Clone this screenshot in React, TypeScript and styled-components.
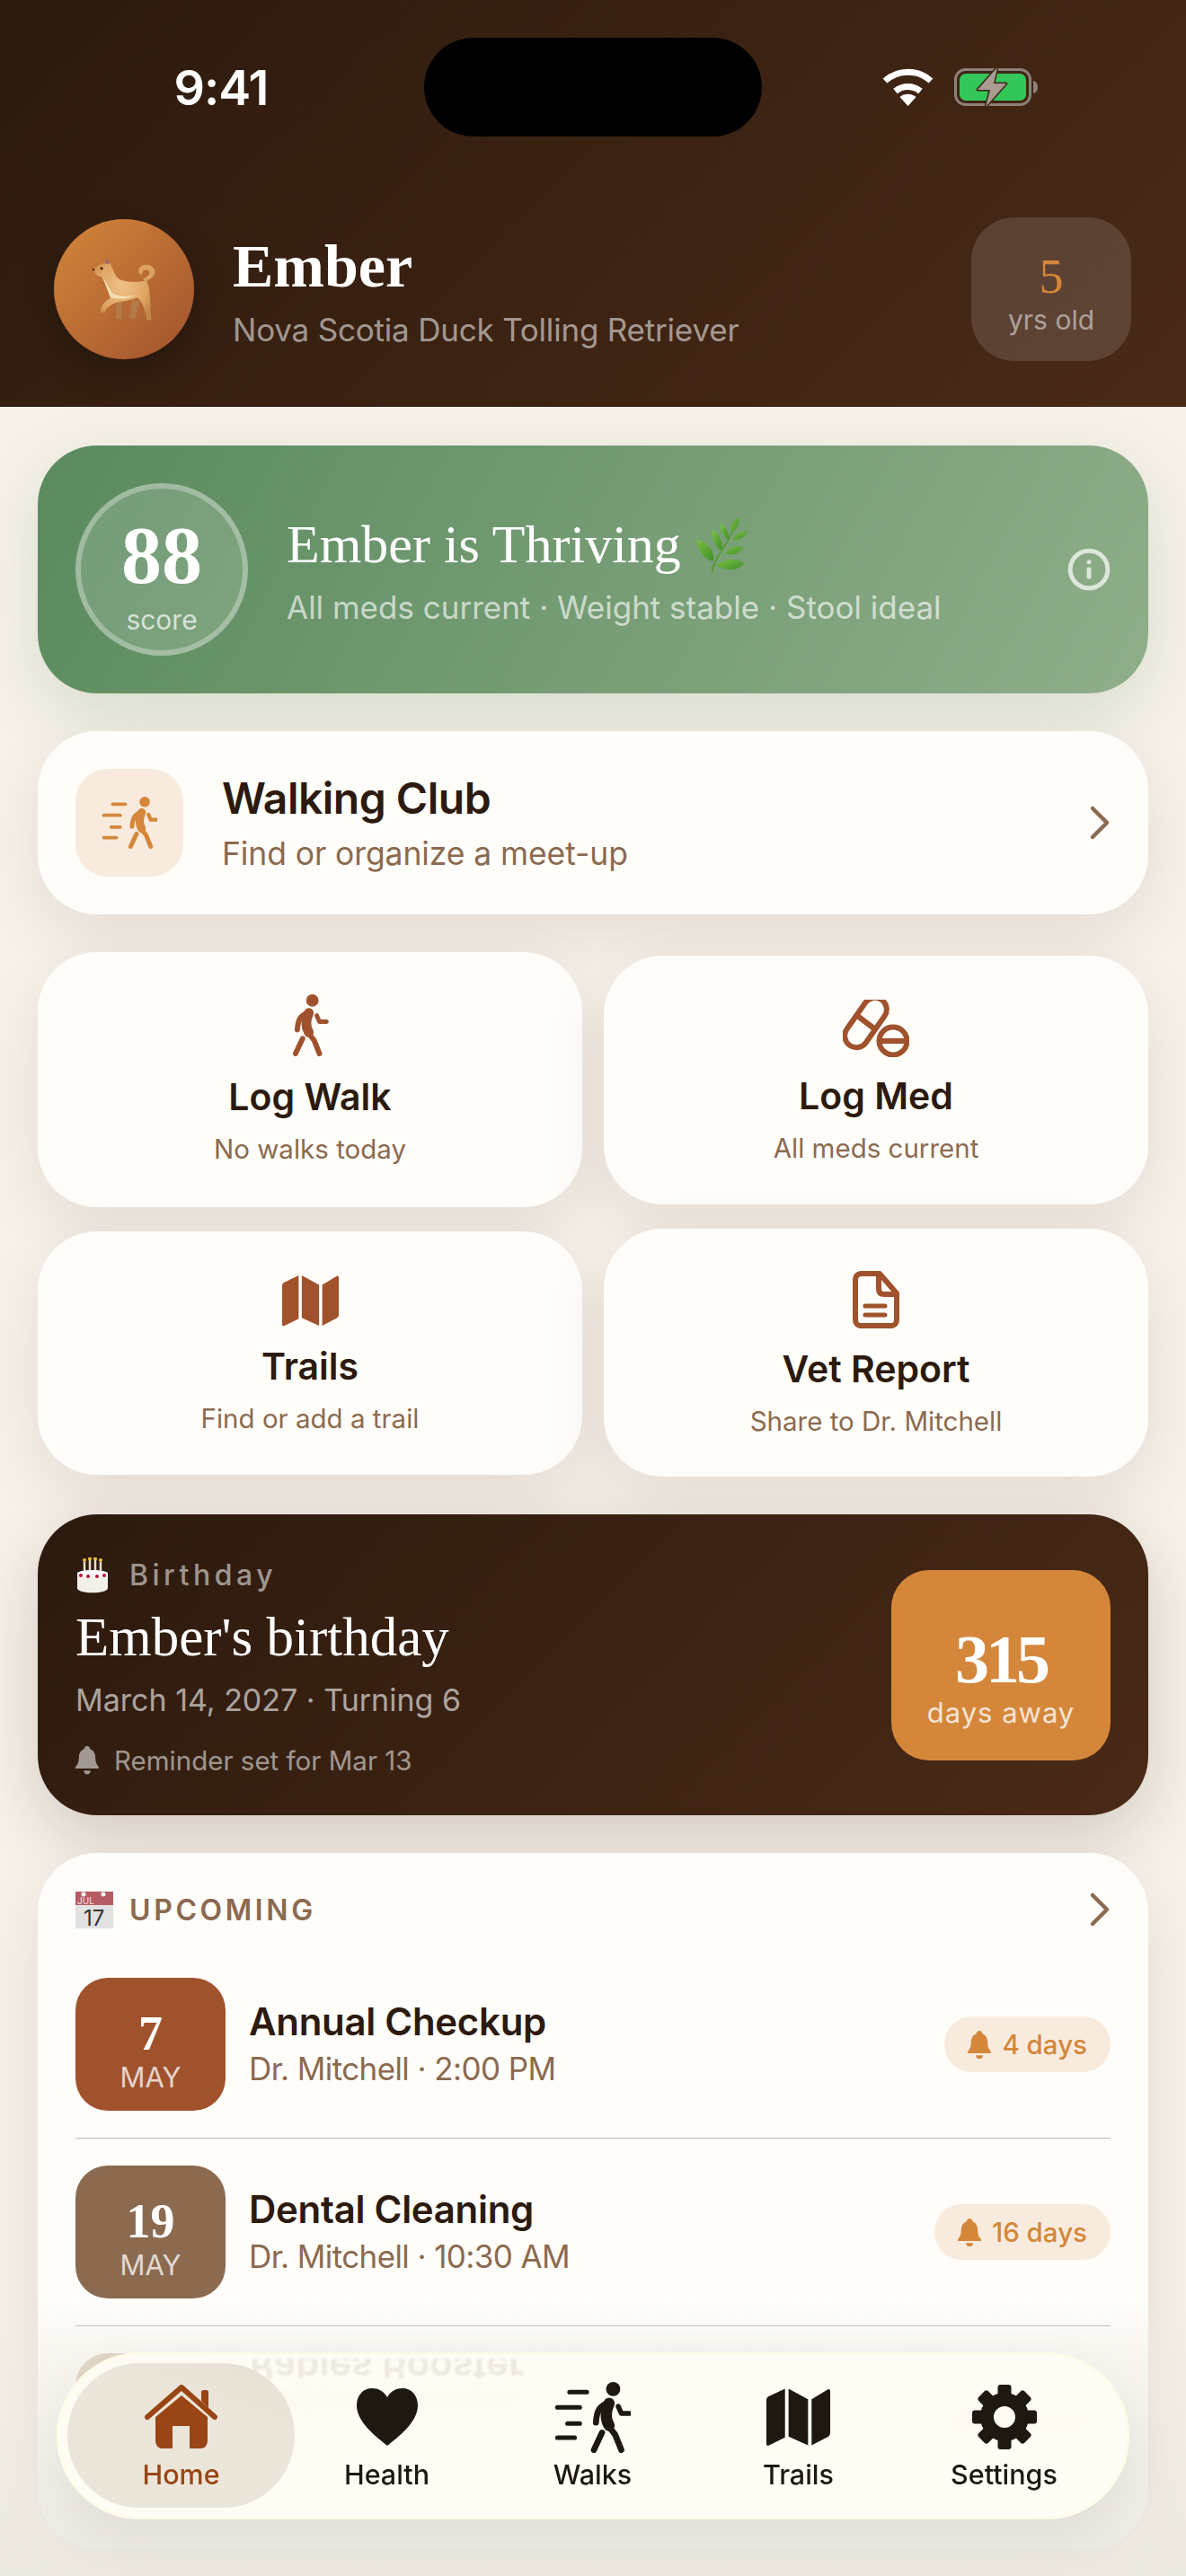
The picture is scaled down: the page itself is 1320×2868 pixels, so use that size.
import React from 'react'
import styled, { createGlobalStyle } from 'styled-components'
import { Info } from 'lucide-react'

const SERIF = '"Liberation Serif", "DejaVu Serif", serif'
const SANS = 'Inter, "Noto Sans", sans-serif'

const Global = createGlobalStyle`
  html, body { margin: 0; padding: 0; background: #f7f1e9; }
  * { box-sizing: border-box; }
`

const Page = styled.div`
  position: relative;
  width: 1320px;
  height: 2868px;
  overflow: hidden;
  background: #f7f1e9;
  font-family: ${SANS};
  color: #2c1a0e;
`

const Header = styled.header`
  height: 453px;
  padding-top: 42px;
  background: linear-gradient(135deg, #2c1a0e 0%, #4a2a17 100%);
`

const StatusBar = styled.div`
  display: grid;
  grid-template-columns: 472px 376px 472px;
  align-items: center;
`

const Clock = styled.div`
  padding-left: 20px;
  text-align: center;
  font-size: 54px;
  font-weight: 600;
  letter-spacing: -1px;
  color: #fff;
`

const Island = styled.div`
  height: 110px;
  border-radius: 55px;
  background: #000;
`

const StatusIcons = styled.div`
  display: flex;
  justify-content: center;
  align-items: center;
  gap: 23px;
  padding-right: 32px;
`

const Profile = styled.div`
  display: flex;
  align-items: center;
  margin-top: 90px;
  padding: 0 61px 0 60px;
`

const Avatar = styled.div`
  display: flex;
  align-items: center;
  justify-content: center;
  flex: none;
  width: 156px;
  height: 156px;
  border-radius: 50%;
  background: linear-gradient(135deg, #d4873a, #a0522d);
  box-shadow: 0 12px 36px rgba(0, 0, 0, 0.25);
`

const ProfileText = styled.div`
  flex: 1;
  margin-left: 43px;
`

const Name = styled.div`
  font-family: ${SERIF};
  font-size: 68px;
  font-weight: 700;
  line-height: 84px;
  color: #fff;
`

const Breed = styled.div`
  margin-top: 5px;
  font-size: 35px;
  line-height: 48px;
  letter-spacing: -0.2px;
  color: rgba(255, 255, 255, 0.55);
`

const AgeBadge = styled.div`
  display: flex;
  flex-direction: column;
  align-items: center;
  justify-content: center;
  width: 178px;
  height: 160px;
  padding-top: 12px;
  border-radius: 48px;
  background: rgba(255, 255, 255, 0.13);
`

const AgeValue = styled.div`
  font-family: ${SERIF};
  font-size: 54px;
  line-height: 56px;
  color: #d4873a;
`

const AgeLabel = styled.div`
  font-size: 30px;
  line-height: 40px;
  color: rgba(255, 255, 255, 0.5);
`

const Content = styled.main`
  display: flex;
  flex-direction: column;
  gap: 42px;
  padding: 43px 42px 0;
`

const ScoreCard = styled.section`
  display: flex;
  align-items: center;
  height: 276px;
  padding: 0 41px 0 42px;
  border-radius: 66px;
  background: linear-gradient(118deg, #5a8a5e 0%, #8fae8a 100%);
  box-shadow: 0 24px 72px rgba(90, 138, 94, 0.2);
`

const ScoreRing = styled.div`
  display: flex;
  flex-direction: column;
  align-items: center;
  flex: none;
  width: 192px;
  height: 192px;
  padding-top: 30px;
  border: 6px solid rgba(255, 255, 255, 0.3);
  border-radius: 50%;
  background: rgba(255, 255, 255, 0.15);
`

const ScoreValue = styled.div`
  font-family: ${SERIF};
  font-size: 90px;
  font-weight: 700;
  line-height: 90px;
  color: #fff;
`

const ScoreLabel = styled.div`
  margin-top: 6px;
  font-size: 30px;
  line-height: 40px;
  color: rgba(255, 255, 255, 0.7);
`

const ScoreText = styled.div`
  flex: 1;
  margin-left: 43px;
  padding-top: 3px;
`

const ScoreTitle = styled.div`
  display: flex;
  align-items: center;
  gap: 14px;
  font-family: ${SERIF};
  font-size: 60px;
  line-height: 68px;
  color: #fff;
`

const ScoreSub = styled.div`
  margin-top: 13px;
  font-size: 35px;
  line-height: 46px;
  color: rgba(255, 255, 255, 0.65);
`

const Card = styled.section`
  border-radius: 66px;
  background: #fefdf9;
  box-shadow: 0 24px 72px rgba(44, 26, 14, 0.09);
`

const ClubCard = styled(Card)`
  display: flex;
  align-items: center;
  height: 204px;
  padding: 0 42px;
`

const ClubIcon = styled.div`
  display: flex;
  align-items: center;
  justify-content: center;
  flex: none;
  width: 120px;
  height: 120px;
  border-radius: 36px;
  background: #f8ebdd;
`

const ClubText = styled.div`
  flex: 1;
  margin-left: 43px;
`

const ClubTitle = styled.div`
  margin-top: 2px;
  font-size: 48px;
  font-weight: 600;
  line-height: 60px;
  letter-spacing: -0.5px;
`

const ClubSub = styled.div`
  margin-top: 8px;
  font-size: 35.5px;
  line-height: 48px;
  letter-spacing: -0.1px;
  color: #8b6a50;
`

const ActionGrid = styled.div`
  display: grid;
  grid-template-columns: 606px 606px;
  column-gap: 24px;
  row-gap: 24px;
  align-items: center;
`

const ActionCard = styled(Card)<{ $h: number; $top: number }>`
  display: flex;
  flex-direction: column;
  align-items: center;
  height: ${p => p.$h}px;
  padding-top: ${p => p.$top}px;
`

const ActionTitle = styled.div<{ $gap: number }>`
  margin-top: ${p => p.$gap}px;
  font-size: 41px;
  font-weight: 600;
  line-height: 56px;
`

const ActionSub = styled.div`
  margin-top: 10px;
  font-size: 29.5px;
  line-height: 40px;
  color: #8b6a50;
`

const BirthdayCard = styled.section`
  display: flex;
  align-items: center;
  justify-content: space-between;
  height: 335px;
  padding: 0 42px;
  border-radius: 66px;
  background: linear-gradient(135deg, #2c1a0e 0%, #4a2a17 100%);
  box-shadow: 0 24px 72px rgba(44, 26, 14, 0.18);
`

const BirthdayEyebrow = styled.div`
  display: flex;
  align-items: center;
  gap: 20px;
  margin-top: 6px;
  font-size: 32px;
  font-weight: 500;
  line-height: 40px;
  letter-spacing: 4.5px;
  color: rgba(255, 255, 255, 0.55);
`

const BirthdayTitle = styled.div`
  margin-top: 14px;
  font-family: ${SERIF};
  font-size: 61px;
  line-height: 70px;
  color: #fff;
`

const BirthdayDate = styled.div`
  margin-top: 12px;
  font-size: 34px;
  line-height: 46px;
  color: rgba(255, 255, 255, 0.6);
`

const Reminder = styled.div`
  display: flex;
  align-items: center;
  gap: 17px;
  margin-top: 24px;
  font-size: 29.5px;
  line-height: 40px;
  color: rgba(255, 255, 255, 0.55);
`

const CountBox = styled.div`
  display: flex;
  flex-direction: column;
  align-items: center;
  justify-content: center;
  width: 244px;
  height: 212px;
  padding-top: 26px;
  border-radius: 42px;
  background: #d4873a;
`

const CountValue = styled.div`
  font-family: ${SERIF};
  font-size: 76px;
  font-weight: 700;
  line-height: 80px;
  letter-spacing: -4px;
  color: #fff;
`

const CountLabel = styled.div`
  font-size: 31px;
  line-height: 40px;
  letter-spacing: 1px;
  color: rgba(255, 255, 255, 0.8);
`

const UpcomingCard = styled(Card)`
  padding: 40px 42px;
`

const UpcomingHead = styled.div`
  display: flex;
  align-items: center;
  height: 46px;
  margin-bottom: 23px;
`

const UpcomingLabel = styled.div`
  flex: 1;
  margin-left: 18px;
  font-size: 32px;
  font-weight: 600;
  letter-spacing: 3.6px;
  color: #8b6a50;
`

const Row = styled.div<{ $last?: boolean }>`
  display: flex;
  align-items: center;
  padding: 30px 0;
  border-bottom: ${p => (p.$last ? 'none' : '1px solid #bfb9af')};
`

const DateBox = styled.div<{ $bg: string }>`
  display: flex;
  flex-direction: column;
  align-items: center;
  justify-content: center;
  flex: none;
  width: 167px;
  height: 148px;
  border-radius: 36px;
  background: ${p => p.$bg};
  color: #fff;
`

const DateDay = styled.div`
  font-family: ${SERIF};
  font-size: 54px;
  font-weight: 700;
  line-height: 62px;
  margin-top: 12px;
`

const DateMonth = styled.div`
  font-size: 31px;
  line-height: 36px;
  color: rgba(255, 255, 255, 0.75);
`

const RowText = styled.div`
  flex: 1;
  margin-left: 26px;
`

const RowTitle = styled.div`
  font-size: 42px;
  font-weight: 600;
  line-height: 52px;
  letter-spacing: -0.3px;
`

const RowSub = styled.div`
  margin-top: 2px;
  font-size: 35px;
  line-height: 48px;
  letter-spacing: -0.6px;
  color: #8b6a50;
`

const Pill = styled.div`
  display: flex;
  align-items: center;
  gap: 12px;
  height: 62px;
  padding: 0 26px 0 26px;
  border-radius: 31px;
  background: #f8ebdd;
  font-size: 29.5px;
  font-weight: 500;
  color: #d4873a;
`

const Fade = styled.div`
  position: absolute;
  left: 0;
  right: 0;
  bottom: 0;
  height: 308px;
  background: linear-gradient(180deg, rgba(236, 232, 224, 0) 0%, rgba(236, 232, 224, 0.35) 20%, rgba(236, 232, 224, 0.95) 100%);
`

const Nav = styled.nav`
  position: absolute;
  left: 63px;
  top: 2619px;
  display: flex;
  width: 1194px;
  height: 186px;
  padding-left: 24px;
  border-radius: 93px;
  overflow: hidden;
  background: rgba(255, 252, 244, 0.965);
  backdrop-filter: blur(4px);
  box-shadow: inset 0 0 0 3px rgba(255, 250, 232, 0.95), 0 18px 54px rgba(44, 26, 14, 0.07);
`

const Mirror = styled.div`
  position: absolute;
  left: 215px;
  top: 7px;
  height: 22px;
  overflow: hidden;
  font-size: 42px;
  font-weight: 600;
  line-height: 22px;
  color: rgba(90, 60, 40, 0.1);
  filter: blur(1px);
  transform: scaleY(-1);
`

const NavItem = styled.div<{ $active?: boolean }>`
  position: relative;
  display: flex;
  flex-direction: column;
  align-items: center;
  width: 229px;
  padding-top: 36px;
  color: ${p => (p.$active ? '#9a4515' : '#1e1810')};

  &::before {
    content: '';
    display: ${p => (p.$active ? 'block' : 'none')};
    position: absolute;
    left: -12px;
    top: 12px;
    width: 253px;
    height: 161px;
    border-radius: 80px;
    background: linear-gradient(200deg, #e6dfd3 0%, #ece6da 35%, #ebe5d9 100%);
  }
`

const NavIcon = styled.div`
  position: relative;
  display: flex;
  align-items: center;
  justify-content: center;
  height: 72px;
`

const NavLabel = styled.div`
  position: relative;
  margin-top: 8px;
  font-size: 30.5px;
  font-weight: 500;
  line-height: 40px;
`

const Wifi = () => (
  <svg width="57" height="42" viewBox="0 0 57 42" fill="none">
    <path d="M3 14A38 38 0 0 1 54 14" stroke="#fff" strokeWidth="7" />
    <path d="M14.5 25.5A22 22 0 0 1 42.5 25.5" stroke="#fff" strokeWidth="7" />
    <path d="M19.5 32A14 14 0 0 1 37.5 32L28.5 42Z" fill="#fff" />
  </svg>
)

const Battery = () => (
  <svg width="93" height="44" viewBox="0 0 93 44" fill="none">
    <rect x="1.5" y="2.5" width="83" height="39" rx="11" stroke="#8e8078" strokeWidth="3" />
    <rect x="6" y="7" width="74" height="30" rx="7" fill="#33c759" />
    <path d="M88 15c3 .5 5 3 5 7s-2 6.500-5 7z" fill="#8e8078" />
    <path d="M48 0 L26 25 H40 L35 44 L58 18 H44 Z" fill="#a99c92" stroke="#3d2414" strokeWidth="3" strokeLinejoin="round" paintOrder="stroke" />
  </svg>
)

// apple-style dog emoji, coordinates follow a 480px crop of the avatar
const Dog = () => (
  <svg width="74" height="75" viewBox="120 128 222 226">
    <defs>
      <radialGradient id="dogFur" cx="0.5" cy="0.45" r="0.6">
        <stop offset="0" stopColor="#efc088" />
        <stop offset="0.7" stopColor="#dfa563" />
        <stop offset="1" stopColor="#c4864a" />
      </radialGradient>
    </defs>
    <path d="M302 214C322 206 338 194 334 176C328 156 298 150 282 168C276 178 282 194 292 190C290 178 302 170 314 177C322 186 312 198 294 204Z" fill="#dca262" />
    <path d="M206 280L204 338L222 341L226 284Z" fill="#b27b47" />
    <path d="M256 272L248 337L268 340L284 280Z" fill="#b27b47" />
    <path d="M127 174C136 164 150 158 163 153L171 133L185 152C194 172 200 196 216 206C244 218 280 216 304 211C320 226 318 272 323 341L307 344C302 312 296 286 276 268C252 276 226 280 206 284C190 290 172 298 167 318L152 316C150 298 168 278 186 268C176 240 166 210 156 198C144 198 132 188 127 174Z" fill="url(#dogFur)" />
    <path d="M157 198C166 214 176 244 186 268C210 274 250 272 272 258C244 266 208 264 192 252C180 236 172 212 157 198Z" fill="#f5dcb2" />
    <path d="M165 152L171 133L185 152L177 156Z" fill="#a86a62" />
    <circle cx="156" cy="170" r="4.500" fill="#2c1a0e" />
    <circle cx="129" cy="174" r="3.500" fill="#2c1a0e" />
  </svg>
)

const Leaf = () => (
  <svg width="64" height="66" viewBox="20 15 190 198">
    <defs>
      <linearGradient id="leafFill" x1="0" y1="0" x2="1" y2="1">
        <stop offset="0" stopColor="#7cc043" />
        <stop offset="1" stopColor="#3f8f2a" />
      </linearGradient>
    </defs>
    <path d="M80 208C84 170 120 130 148 75" stroke="#5b9a35" strokeWidth="6" fill="none" />
    <g fill="url(#leafFill)">
      <path d="M30 98C62 104 92 135 84 170C55 165 30 135 30 98Z" />
      <path d="M82 65C104 78 120 104 112 134C90 122 78 96 82 65Z" />
      <path d="M110 46C128 56 140 78 136 98C118 90 106 70 110 46Z" />
      <path d="M170 24C174 44 160 68 146 76C138 58 150 34 170 24Z" />
      <path d="M200 70C190 92 170 102 150 100C156 82 176 70 200 70Z" />
      <path d="M184 124C170 148 146 152 124 146C134 124 160 116 184 124Z" />
      <path d="M188 178C166 204 130 204 96 186C120 160 160 158 188 178Z" />
    </g>
  </svg>
)

const Cake = () => (
  <svg width="40" height="40" viewBox="0 0 40 40">
    <g stroke="#e9dfc9" strokeWidth="2.500">
      <path d="M10 5V18M16 3V18M22 3V18M28 5V18" />
    </g>
    <g fill="#f0c23c">
      <circle cx="10" cy="3" r="2" />
      <circle cx="16" cy="1.500" r="2" />
      <circle cx="22" cy="1.500" r="2" />
      <circle cx="28" cy="3" r="2" />
    </g>
    <path d="M2 18C2 13 36 13 36 18V34C36 41 2 41 2 34Z" fill="#f3f0ea" />
    <path d="M2 18C2 22 36 22 36 18C36 13 2 13 2 18Z" fill="#fff" />
    <g fill="#b2163a">
      <circle cx="6" cy="20" r="2" />
      <circle cx="14" cy="21" r="2" />
      <circle cx="24" cy="21" r="2" />
      <circle cx="32" cy="20" r="2" />
    </g>
  </svg>
)

const CalendarGlyph = () => (
  <svg width="42" height="41" viewBox="0 0 42 41">
    <rect y="15" width="42" height="26" fill="#e1e1e1" />
    <rect width="42" height="15" fill="#b65a63" />
    <circle cx="9" cy="3" r="2.500" fill="#f5f5f5" />
    <circle cx="31" cy="3" r="2.500" fill="#f5f5f5" />
    <text x="2" y="13.500" fontSize="10" fill="#f5e4e4" fontFamily="Inter, sans-serif">JUL</text>
    <text x="9" y="38" fontSize="24" fill="#333" fontFamily="Inter, sans-serif">17</text>
  </svg>
)

const Chevron = () => (
  <svg width="24" height="40" viewBox="0 0 24 40" fill="none">
    <path d="M4 4L20 20L4 36" stroke="#8b6a50" strokeWidth="4.500" strokeLinecap="round" strokeLinejoin="round" />
  </svg>
)

const Bell = ({ size = 26, color }: { size?: number; color: string }) => (
  <svg width={size} height={size * 1.25} viewBox="0 0 24 30">
    <path
      d="M12 1C14 1 15 2.500 15 4C19 5.500 20.500 9 20.500 13C20.500 18 22 20 24 22.500V24H0V22.500C2 20 3.500 18 3.500 13C3.500 9 5 5.500 9 4C9 2.500 10 1 12 1ZM8.500 26H15.500C15.500 28 14 30 12 30C10 30 8.500 28 8.500 26Z"
      fill={color}
    />
  </svg>
)

const Walker = ({ color, lines, h }: { color: string; lines?: boolean; h: number }) => {
  const left = lines ? -34 : 0
  const vw = 42 - left
  return (
    <svg width={(h * vw) / 70} height={h} viewBox={`${left} 0 ${vw} 70`} fill="none">
      <circle cx="24" cy="7" r="7" fill={color} />
      <g stroke={color} strokeLinecap="round" strokeLinejoin="round">
        <path d="M20 20C14 23 8 24 7 40" strokeWidth="6" />
        <path d="M20 21C16 30 17 38 20 43" strokeWidth="11" />
        <path d="M29 24L32 31H40" strokeWidth="5" />
        <path d="M19 43L26 52L32 67" strokeWidth="6" />
        <path d="M13 50L5 67" strokeWidth="6" />
        {lines && (
          <g strokeWidth="4.500">
            <path d="M-19 10H-2" />
            <path d="M-31 25H-9" />
            <path d="M-21 41H-9" />
            <path d="M-31 55H-14" />
          </g>
        )}
      </g>
    </svg>
  )
}

const PillIcon = () => (
  <svg width="74" height="64" viewBox="0 0 74 64" fill="none" stroke="#a0522d" strokeWidth="6">
    <rect x="-31" y="-13" width="62" height="26" rx="13" transform="translate(25.500 25.500) rotate(-55)" />
    <path d="M15 17L36 33" />
    <circle cx="56" cy="46" r="15.500" />
    <path d="M41 46H71" />
  </svg>
)

const MapIcon = ({ color, w, h }: { color: string; w: number; h: number }) => (
  <svg width={w} height={h} viewBox="0 0 72 66">
    <path d="M21 1V56L3 65C1 66 0 65 0 63V14C0 12 1 11 2 10Z" fill={color} />
    <path d="M25 1L47 13V65L25 55Z" fill={color} />
    <path d="M51 13L69 2C71 1 72 2 72 4V51C72 53 71 54 70 55L51 65Z" fill={color} />
  </svg>
)

const DocIcon = () => (
  <svg width="52" height="64" viewBox="0 0 52 64" fill="none" stroke="#a0522d" strokeWidth="6" strokeLinejoin="round">
    <path d="M10 3H30L49 25V54C49 58 47 61 43 61H9C5 61 3 58 3 54V10C3 6 5 3 10 3Z" />
    <path d="M29 3V20C29 24 31 26 35 26H49" />
    <path d="M14 39H36M14 49H36" strokeLinecap="round" strokeWidth="5" />
  </svg>
)

const HomeIcon = () => (
  <svg width="81" height="72" viewBox="0 0 81 72" fill="none">
    <path d="M12 36L41 12L70 36V62C70 67 67 71 63 71H19C15 71 12 67 12 62Z" fill="#9a4515" />
    <rect x="31" y="46" width="19" height="25" fill="#ebe5d9" />
    <path d="M3 36L41 3L78 36" stroke="#9a4515" strokeWidth="6" strokeLinecap="round" strokeLinejoin="round" />
    <path d="M63 18V8C63 7 64 6 65 6H69C70 6 71 7 71 8V26Z" fill="#9a4515" />
  </svg>
)

const HeartIcon = () => (
  <svg width="68" height="64" viewBox="0 0 68 64">
    <path d="M34 10C30 3 24 0 17 0C7 0 0 8 0 19C0 38 22 54 34 64C46 54 68 38 68 19C68 8 61 0 51 0C44 0 38 3 34 10Z" fill="#1e1810" />
  </svg>
)

const GearIcon = () => (
  <svg width="72" height="72" viewBox="-36 -36 72 72" fill="none">
    {[0, 45, 90, 135, 180, 225, 270, 315].map(a => (
      <rect key={a} x="-7.500" y="-36" width="15" height="14" rx="3" fill="#1e1810" transform={`rotate(${a})`} />
    ))}
    <circle r="19.500" stroke="#1e1810" strokeWidth="15" />
  </svg>
)

const navItems = [
  { label: 'Home', icon: <HomeIcon />, active: true },
  { label: 'Health', icon: <HeartIcon /> },
  { label: 'Walks', icon: <Walker color="#1e1810" lines h={79} /> },
  { label: 'Trails', icon: <MapIcon color="#1e1810" w={71} h={66} /> },
  { label: 'Settings', icon: <GearIcon /> },
]

const App: React.FC = () => (
  <Page>
    <Global />
    <Header>
      <StatusBar>
        <Clock>9:41</Clock>
        <Island />
        <StatusIcons>
          <Wifi />
          <Battery />
        </StatusIcons>
      </StatusBar>
      <Profile>
        <Avatar>
          <Dog />
        </Avatar>
        <ProfileText>
          <Name>Ember</Name>
          <Breed>Nova Scotia Duck Tolling Retriever</Breed>
        </ProfileText>
        <AgeBadge>
          <AgeValue>5</AgeValue>
          <AgeLabel>yrs old</AgeLabel>
        </AgeBadge>
      </Profile>
    </Header>
    <Content>
      <ScoreCard>
        <ScoreRing>
          <ScoreValue>88</ScoreValue>
          <ScoreLabel>score</ScoreLabel>
        </ScoreRing>
        <ScoreText>
          <ScoreTitle>
            Ember is Thriving <Leaf />
          </ScoreTitle>
          <ScoreSub>All meds current · Weight stable · Stool ideal</ScoreSub>
        </ScoreText>
        <Info size={50} strokeWidth={2.4} color="rgba(255,255,255,0.7)" />
      </ScoreCard>

      <ClubCard>
        <ClubIcon>
          <Walker color="#d4873a" lines h={58} />
        </ClubIcon>
        <ClubText>
          <ClubTitle>Walking Club</ClubTitle>
          <ClubSub>Find or organize a meet-up</ClubSub>
        </ClubText>
        <Chevron />
      </ClubCard>

      <ActionGrid>
        <ActionCard $h={284} $top={47}>
          <Walker color="#a0522d" h={69} />
          <ActionTitle $gap={17}>Log Walk</ActionTitle>
          <ActionSub>No walks today</ActionSub>
        </ActionCard>
        <ActionCard $h={277} $top={49}>
          <PillIcon />
          <ActionTitle $gap={15}>Log Med</ActionTitle>
          <ActionSub>All meds current</ActionSub>
        </ActionCard>
        <ActionCard $h={271} $top={48}>
          <MapIcon color="#a0522d" w={63} h={58} />
          <ActionTitle $gap={16}>Trails</ActionTitle>
          <ActionSub>Find or add a trail</ActionSub>
        </ActionCard>
        <ActionCard $h={276} $top={47}>
          <DocIcon />
          <ActionTitle $gap={17}>Vet Report</ActionTitle>
          <ActionSub>Share to Dr. Mitchell</ActionSub>
        </ActionCard>
      </ActionGrid>

      <BirthdayCard>
        <div>
          <BirthdayEyebrow>
            <Cake /> Birthday
          </BirthdayEyebrow>
          <BirthdayTitle>Ember's birthday</BirthdayTitle>
          <BirthdayDate>March 14, 2027 · Turning 6</BirthdayDate>
          <Reminder>
            <Bell size={26} color="rgba(255,255,255,0.55)" />
            Reminder set for Mar 13
          </Reminder>
        </div>
        <CountBox>
          <CountValue>315</CountValue>
          <CountLabel>days away</CountLabel>
        </CountBox>
      </BirthdayCard>

      <UpcomingCard>
        <UpcomingHead>
          <CalendarGlyph />
          <UpcomingLabel>UPCOMING</UpcomingLabel>
          <Chevron />
        </UpcomingHead>
        <Row>
          <DateBox $bg="#a0522d">
            <DateDay>7</DateDay>
            <DateMonth>MAY</DateMonth>
          </DateBox>
          <RowText>
            <RowTitle>Annual Checkup</RowTitle>
            <RowSub>Dr. Mitchell · 2:00 PM</RowSub>
          </RowText>
          <Pill>
            <Bell color="#d4873a" />4 days
          </Pill>
        </Row>
        <Row>
          <DateBox $bg="#8b6a50">
            <DateDay>19</DateDay>
            <DateMonth>MAY</DateMonth>
          </DateBox>
          <RowText>
            <RowTitle>Dental Cleaning</RowTitle>
            <RowSub>Dr. Mitchell · 10:30 AM</RowSub>
          </RowText>
          <Pill>
            <Bell color="#d4873a" />16 days
          </Pill>
        </Row>
        <Row $last>
          <DateBox $bg="#dccdb8">
            <DateDay>28</DateDay>
            <DateMonth>MAY</DateMonth>
          </DateBox>
          <RowText>
            <RowTitle>Rabies Booster</RowTitle>
            <RowSub>Dr. Mitchell · 3:15 PM</RowSub>
          </RowText>
          <Pill>
            <Bell color="#d4873a" />25 days
          </Pill>
        </Row>
      </UpcomingCard>
    </Content>

    <Fade />

    <Nav>
      <Mirror>Rabies Booster</Mirror>
      {navItems.map(item => (
        <NavItem key={item.label} $active={item.active}>
          <NavIcon>{item.icon}</NavIcon>
          <NavLabel>{item.label}</NavLabel>
        </NavItem>
      ))}
    </Nav>
  </Page>
)

export default App
